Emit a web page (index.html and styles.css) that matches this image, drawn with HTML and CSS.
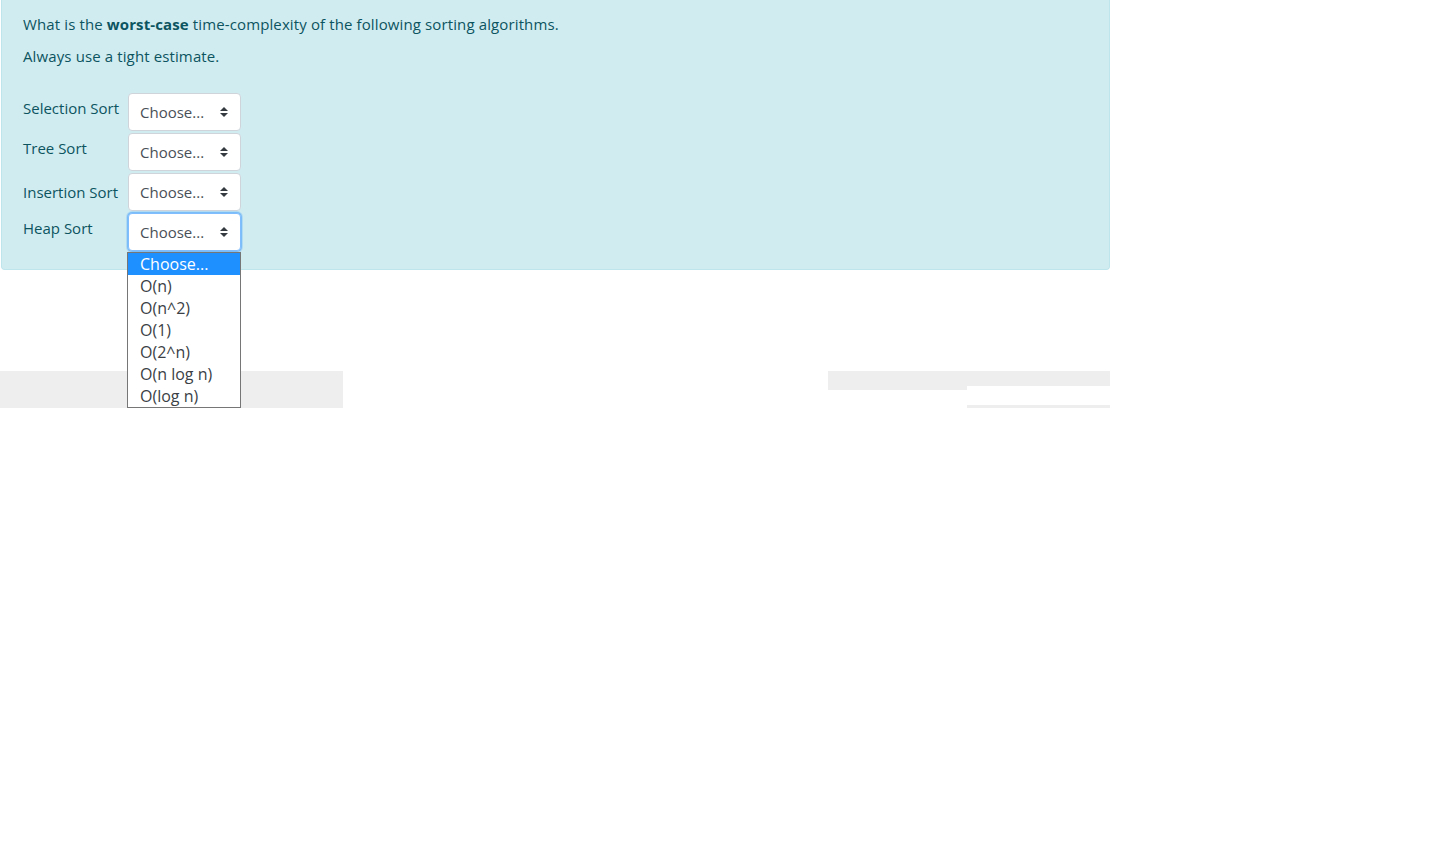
FILE: index.html
```html
<!DOCTYPE html>
<html>
<head>
<meta charset="utf-8">
<link rel="stylesheet" href="styles.css">
</head>
<body>
<div class="alert">
  <p class="intro">What is the <strong>worst-case</strong> time-complexity of the following sorting algorithms.</p>
  <p class="intro second">Always use a tight estimate.</p>
  <div class="rows">
    <div class="row r1">
      <span class="label">Selection Sort</span>
      <div class="select"><span>Choose...</span><svg class="caret" width="8" height="10" viewBox="0 0 8 10"><path d="M4 0L8 4H0Z M0 6H8L4 10Z" fill="#343a40"/></svg></div>
    </div>
    <div class="row r2">
      <span class="label">Tree Sort</span>
      <div class="select"><span>Choose...</span><svg class="caret" width="8" height="10" viewBox="0 0 8 10"><path d="M4 0L8 4H0Z M0 6H8L4 10Z" fill="#343a40"/></svg></div>
    </div>
    <div class="row r3">
      <span class="label">Insertion Sort</span>
      <div class="select"><span>Choose...</span><svg class="caret" width="8" height="10" viewBox="0 0 8 10"><path d="M4 0L8 4H0Z M0 6H8L4 10Z" fill="#343a40"/></svg></div>
    </div>
    <div class="row r4">
      <span class="label">Heap Sort</span>
      <div class="select-wrap">
        <div class="select focused"><span>Choose...</span><svg class="caret" width="8" height="10" viewBox="0 0 8 10"><path d="M4 0L8 4H0Z M0 6H8L4 10Z" fill="#343a40"/></svg></div>
        <ul class="dropdown">
          <li class="active">Choose...</li>
          <li>O(n)</li>
          <li>O(n^2)</li>
          <li>O(1)</li>
          <li>O(2^n)</li>
          <li>O(n log n)</li>
          <li>O(log n)</li>
        </ul>
      </div>
    </div>
  </div>
</div>
<div class="band">
  <div class="seg seg-a"></div>
  <div class="seg-gap"></div>
  <div class="seg seg-b"></div>
  <div class="seg seg-c"><div class="c-top"></div><div class="c-mid"></div><div class="c-bot"></div></div>
</div>
</body>
</html>
```

FILE: styles.css
```css
html, body {
  margin: 0;
  padding: 0;
  background: #fff;
}
body {
  font-family: "Open Sans", "Noto Sans", sans-serif;
  font-size: 15px;
  color: #0c5460;
}
.alert {
  margin-left: 1px;
  width: 1107px;
  height: 269px;
  box-sizing: content-box;
  background: #d1ecf1;
  border: 1px solid #bee5eb;
  border-top: none;
  border-radius: 0 0 4px 4px;
  padding: 0;
}
.intro {
  margin: 0;
  padding-left: 21px;
  line-height: 20px;
  padding-top: 14px;
  letter-spacing: 0.12px;
}
.intro.second {
  padding-top: 12px;
}
.intro strong {
  font-weight: 700;
}
.rows {
  padding-top: 27px;
  padding-left: 21px;
  display: flex;
  flex-direction: column;
  gap: 2px;
}
.row {
  display: flex;
  align-items: flex-start;
  height: 38px;
}
.label {
  width: 105px;
  line-height: 20px;
  white-space: nowrap;
}
.r1 .label { padding-top: 5px; }
.r2 .label { padding-top: 5px; }
.r3 .label { padding-top: 9px; }
.r4 .label { padding-top: 5px; }
.select-wrap {
  position: relative;
}
.select {
  height: 36px;
  background: #fff;
  border: 1px solid #ced4da;
  border-radius: 4px;
  display: flex;
  align-items: center;
  justify-content: space-between;
  padding: 0 12px 0 11px;
  box-sizing: content-box;
  width: 88px;
  color: #495057;
  font-size: 15px;
}
.select.focused {
  border-color: #80bdff;
  box-shadow: 0 0 0 1px rgba(0, 123, 255, 0.3), 0 0 0 2px rgba(0, 123, 255, 0.15);
}
.caret {
  display: block;
}
.dropdown {
  position: absolute;
  left: -1px;
  top: 39px;
  width: 112px;
  margin: 0;
  padding: 0;
  list-style: none;
  background: #fff;
  border: 1px solid #767676;
  z-index: 5;
}
.dropdown li {
  height: 22px;
  line-height: 22px;
  padding-left: 12px;
  color: #3b3f46;
  font-size: 16px;
}
.dropdown li.active {
  background: #1e90ff;
  color: #fff;
}
.band {
  margin-top: 101px;
  display: flex;
  height: 37px;
  width: 1110px;
}
.seg {
  background: #eeeeee;
}
.seg-a {
  width: 343px;
}
.seg-gap {
  width: 485px;
}
.seg-b {
  width: 139px;
  height: 19px;
}
.seg-c {
  width: 143px;
  background: transparent;
  display: flex;
  flex-direction: column;
}
.c-top {
  height: 15px;
  background: #eeeeee;
}
.c-mid {
  height: 19px;
}
.c-bot {
  height: 3px;
  background: #eeeeee;
}
```
